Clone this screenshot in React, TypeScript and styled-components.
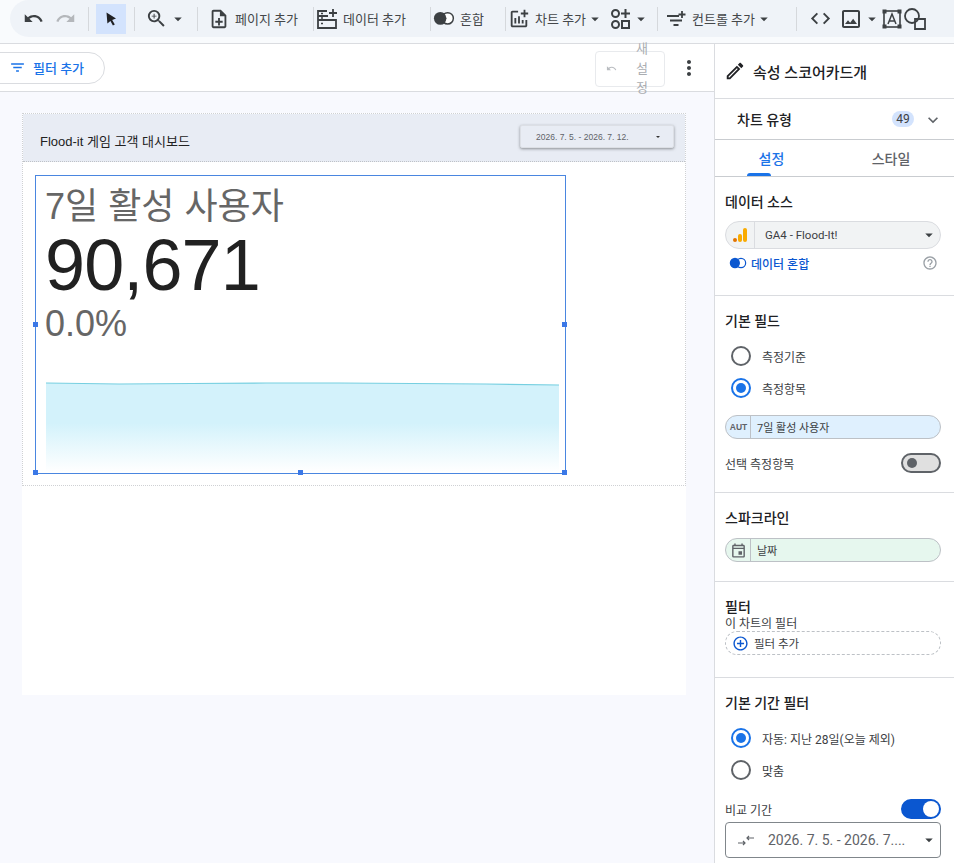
import React, { FunctionComponent, ReactNode } from "react";
import styled, { createGlobalStyle } from "styled-components";
import {
  MdUndo,
  MdRedo,
  MdZoomIn,
  MdOutlineNoteAdd,
  MdOutlineAddchart,
  MdCode,
  MdOutlineImage,
  MdArrowDropDown,
  MdMoreVert,
  MdFilterList,
  MdExpandMore,
  MdHelpOutline,
  MdOutlineEdit,
  MdOutlineEvent,
  MdAddCircleOutline,
} from "react-icons/md";

const FONT = `Roboto, "Noto Sans CJK KR", "Liberation Sans", sans-serif`;
const CHART_FONT = `"Liberation Sans", "Noto Sans CJK KR", sans-serif`;

const GlobalStyle = createGlobalStyle`
  html, body {
    margin: 0;
    padding: 0;
    background: #fff;
  }
  body {
    font-family: ${FONT};
    color: #202124;
  }
  * { box-sizing: border-box; }
`;

const Screen = styled.div`
  width: 954px;
  height: 863px;
  overflow: hidden;
  display: flex;
  flex-direction: column;
`;

const TopBar = styled.div`
  height: 44px;
  flex: none;
  background: #f9fbfd;
  border-bottom: 1px solid #dadce0;
  padding-left: 10px;
`;

const ToolPill = styled.div`
  height: 37px;
  width: 1000px;
  background: #eff3f8;
  border-radius: 19px 0 0 19px;
  display: flex;
  align-items: center;
  padding-left: 7px;
  color: #3c4043;
  white-space: nowrap;
`;

const Sep = styled.div<{ $gap?: number }>`
  width: 1px;
  height: 24px;
  flex: none;
  background: #d5d8dc;
  margin: 0 ${(p) => p.$gap ?? 8}px;
`;

const ToolBtn = styled.div<{ $w: number; $off?: boolean }>`
  width: ${(p) => p.$w}px;
  height: 30px;
  flex: none;
  display: flex;
  align-items: center;
  justify-content: center;
  color: ${(p) => (p.$off ? "#b4b7bb" : "#3c4043")};
`;

const CursorBtn = styled(ToolBtn)`
  background: #d3e3fd;
  color: #202124;
`;

const ToolLabel = styled.span`
  font-size: 13px;
  color: #44474a;
  margin-left: 5px;
`;

const ToolGroup = styled.div<{ $w: number }>`
  width: ${(p) => p.$w}px;
  flex: none;
  display: flex;
  align-items: center;
  justify-content: flex-start;
`;

const Main = styled.div`
  flex: 1;
  display: flex;
  min-height: 0;
`;

const Work = styled.div`
  width: 714px;
  flex: none;
  display: flex;
  flex-direction: column;
`;

const FilterBar = styled.div`
  height: 48px;
  flex: none;
  background: #fff;
  border-bottom: 1px solid #dadce0;
  display: flex;
  align-items: center;
  position: relative;
`;

const FilterPill = styled.div`
  height: 32px;
  width: 121px;
  margin-left: -16px;
  padding-left: 24px;
  border: 1px solid #dadce0;
  border-radius: 16px;
  display: flex;
  align-items: center;
  gap: 7px;
  color: #1a73e8;
  font-size: 13px;
  font-weight: 500;
`;

const ResetBtn = styled.div`
  width: 70px;
  height: 36px;
  margin-left: auto;
  margin-top: 2px;
  border: 1px solid #e8eaed;
  border-radius: 4px;
  display: flex;
  align-items: center;
  color: #b9bcc0;
  padding-left: 10px;
`;

const ResetText = styled.span`
  width: 14px;
  margin-left: 18px;
  font-size: 13px;
  line-height: 19.5px;
  word-break: break-all;
  text-align: center;
  color: #aaadb1;
`;

const MoreBtn = styled.div`
  width: 48px;
  flex: none;
  display: flex;
  justify-content: center;
  margin-right: 1px;
  margin-left: 0;
  color: #3c4043;
`;

const Canvas = styled.div`
  flex: 1;
  background: #f8f9fe;
  padding: 21px 28px 0 22px;
`;

const Page = styled.div`
  height: 582px;
  width: 664px;
  background: #fff;
`;

const Grid = styled.div`
  height: 373px;
  border: 1px dotted #cfd1d4;
  display: flex;
  flex-direction: column;
`;

const ReportHead = styled.div`
  height: 48px;
  flex: none;
  background: #e8ecf4;
  border-bottom: 1px dotted #bfc2c7;
  display: flex;
  align-items: center;
  justify-content: space-between;
  padding: 0 11px 0 17px;
`;

const ReportTitle = styled.div`
  font-family: ${CHART_FONT};
  font-size: 13px;
  color: #222;
  padding-top: 6px;
`;

const DateControl = styled.div`
  width: 154px;
  height: 23px;
  margin-top: -2px;
  background: #e8ecf4;
  border-radius: 2px;
  border: 1px solid #dcdfe5;
  box-shadow: 0 1px 3px rgba(60, 64, 67, 0.55);
  display: flex;
  align-items: center;
  justify-content: space-between;
  padding: 0 13px 0 15px;
  font-family: ${CHART_FONT};
  font-size: 8.5px;
  color: #5f6368;
`;

const TinyCaret = styled.span`
  width: 0;
  height: 0;
  border-left: 2.5px solid transparent;
  border-right: 2.5px solid transparent;
  border-top: 2.5px solid #333;
`;

const Scorecard = styled.div`
  position: relative;
  margin: 13px 0 0 12px;
  width: 531px;
  height: 299px;
  border: 1px solid #4a86e0;
  display: flex;
  flex-direction: column;
  padding-left: 9px;
  font-family: ${CHART_FONT};
`;

const ScoreTitle = styled.div`
  font-size: 36px;
  line-height: 42px;
  margin-top: 10px;
  color: #666;
  white-space: nowrap;
`;

const ScoreValue = styled.div`
  font-size: 72px;
  line-height: 74px;
  color: #212121;
  letter-spacing: -0.9px;
`;

const ScoreDelta = styled.div`
  font-size: 36px;
  line-height: 42px;
  margin-top: 1px;
  color: #666;
`;

const Spark = styled.svg`
  display: block;
  margin-top: auto;
  margin-left: 1px;
  margin-bottom: 1px;
`;

const Handle = styled.i<{ $x: string; $y: string }>`
  position: absolute;
  width: 5px;
  height: 5px;
  background: #3b78e7;
  left: ${(p) => p.$x};
  top: ${(p) => p.$y};
  margin: -3px 0 0 -3px;
`;

const Panel = styled.div`
  width: 240px;
  flex: none;
  background: #fff;
  border-left: 1px solid #dadce0;
  display: flex;
  flex-direction: column;
`;

const PanelHead = styled.div`
  height: 55px;
  flex: none;
  border-bottom: 1px solid #dadce0;
  display: flex;
  align-items: center;
  gap: 7px;
  padding-left: 9px;
  font-size: 15px;
  font-weight: 500;
`;

const ChartType = styled.div`
  height: 41px;
  flex: none;
  border-bottom: 1px solid #c9ccd0;
  display: flex;
  align-items: center;
  padding-left: 22px;
  font-size: 14px;
  font-weight: 500;
`;

const Badge = styled.span`
  margin-left: auto;
  width: 22px;
  height: 16px;
  border-radius: 8px;
  background: #d3e3fd;
  color: #3c4043;
  font-size: 12px;
  font-weight: 400;
  display: flex;
  align-items: center;
  justify-content: center;
`;

const Chevron = styled.span`
  width: 40px;
  display: flex;
  justify-content: center;
  padding-right: 2px;
  padding-top: 2px;
  color: #5f6368;
`;

const Tabs = styled.div`
  height: 37px;
  flex: none;
  border-bottom: 1px solid #c9ccd0;
  display: flex;
`;

const Tab = styled.div<{ $on?: boolean }>`
  width: 113px;
  position: relative;
  display: flex;
  justify-content: center;
  padding-top: 8px;
  font-size: 14px;
  font-weight: 500;
  color: ${(p) => (p.$on ? "#1a73e8" : "#5f6368")};
  &:last-child {
    width: 126px;
    padding-right: 0;
  }
  ${(p) =>
    p.$on &&
    `&::after {
      content: "";
      position: absolute;
      left: 32px;
      bottom: 0;
      width: 24px;
      height: 3px;
      border-radius: 3px 3px 0 0;
      background: #1a73e8;
    }`}
`;

const Section = styled.div<{ $h?: number }>`
  height: ${(p) => (p.$h ? `${p.$h}px` : "auto")};
  flex: ${(p) => (p.$h ? "none" : "1")};
  border-bottom: ${(p) => (p.$h ? "1px solid #dadce0" : "0")};
  padding: 15px 13px 0 10px;
`;

const SectionTitle = styled.div`
  font-size: 14px;
  font-weight: 500;
  line-height: 20px;
  color: #202124;
`;

const SourceBox = styled.div`
  height: 28px;
  margin-top: 9px;
  border: 1px solid #dadce0;
  border-radius: 14px;
  background: #f1f3f4;
  display: flex;
  align-items: center;
  font-size: 11.5px;
  color: #3c4043;
`;

const SourceLogo = styled.div`
  width: 29px;
  height: 100%;
  flex: none;
  border-right: 1px solid #dadce0;
  display: flex;
  align-items: center;
  justify-content: center;
`;

const SourceName = styled.span`
  margin-left: 10px;
  flex: 1;
`;

const CaretWrap = styled.span`
  display: flex;
  margin-right: 2px;
  color: #3c4043;
`;

const BlendRow = styled.div`
  display: flex;
  align-items: center;
  margin: 4px 0 0 4px;
  gap: 4px;
  color: #0b57d0;
  font-size: 12px;
  font-weight: 500;
  height: 20px;
`;

const HelpIcon = styled.span`
  margin-left: auto;
  display: flex;
  margin-right: 3px;
  color: #9aa0a6;
`;

const RadioRow = styled.div`
  height: 32px;
  display: flex;
  align-items: center;
  padding-left: 6px;
  gap: 11px;
  font-size: 12px;
  color: #3c4043;
`;

const RadioGroup = styled.div<{ $top: number }>`
  margin-top: ${(p) => p.$top}px;
`;

const RadioDot = styled.span<{ $on?: boolean }>`
  width: 20px;
  height: 20px;
  border-radius: 50%;
  flex: none;
  border: 2px solid ${(p) => (p.$on ? "#1a73e8" : "#5f6368")};
  display: flex;
  align-items: center;
  justify-content: center;
  &::after {
    content: "";
    width: 10px;
    height: 10px;
    border-radius: 50%;
    background: ${(p) => (p.$on ? "#1a73e8" : "transparent")};
  }
`;

const FieldChip = styled.div<{ $bg: string; $top: number }>`
  height: 24px;
  margin-top: ${(p) => p.$top}px;
  border: 1px solid #bdc1c6;
  border-radius: 12px;
  background: ${(p) => p.$bg};
  display: flex;
  align-items: center;
  font-size: 11px;
  color: #3c4043;
`;

const ChipType = styled.span`
  width: 25px;
  height: 100%;
  flex: none;
  border-right: 1px solid #bdc1c6;
  display: flex;
  align-items: center;
  justify-content: center;
  font-family: "Liberation Sans", sans-serif;
  font-size: 8.5px;
  font-weight: 700;
  color: #5f6368;
  padding-left: 1px;
`;

const ChipText = styled.span`
  margin-left: 6px;
`;

const SwitchRow = styled.div<{ $top: number }>`
  display: flex;
  align-items: center;
  justify-content: space-between;
  margin-top: ${(p) => p.$top}px;
  font-size: 12px;
  height: 20px;
  color: #3c4043;
`;

const Switch = styled.span<{ $on?: boolean }>`
  width: 40px;
  height: 20px;
  flex: none;
  border-radius: 10px;
  display: flex;
  align-items: center;
  position: relative;
  background: ${(p) => (p.$on ? "#0b57d0" : "#e0e0e0")};
  border: 2px solid ${(p) => (p.$on ? "#0b57d0" : "#5f6368")};
  &::after {
    content: "";
    position: absolute;
    border-radius: 50%;
    width: ${(p) => (p.$on ? "16px" : "10px")};
    height: ${(p) => (p.$on ? "16px" : "10px")};
    background: ${(p) => (p.$on ? "#fff" : "#5f6368")};
    left: ${(p) => (p.$on ? "20px" : "4px")};
  }
`;

const FilterCaption = styled.div`
  font-size: 12px;
  line-height: 14px;
  margin-top: 0;
  color: #3c4043;
`;

const AddFilter = styled.div`
  height: 24px;
  border: 1px dashed #bdc1c6;
  border-radius: 12px;
  display: flex;
  align-items: center;
  gap: 5px;
  padding-left: 6px;
  font-size: 11.5px;
  color: #3c4043;
`;

const AddIcon = styled.span`
  display: flex;
  color: #0b57d0;
`;

const CompareBox = styled.div`
  height: 36px;
  margin-top: 3px;
  border: 1px solid #80868b;
  border-radius: 4px;
  display: flex;
  align-items: center;
  padding-left: 11px;
  font-size: 14px;
  color: #5f6368;
  white-space: nowrap;
`;

const CompareText = styled.span`
  margin-left: 13px;
  flex: 1;
`;

const Caret = () => <MdArrowDropDown size={18} />;

const BlendIcon: FunctionComponent<{ size: number; color: string }> = ({ size, color }) => (
  <svg width={size} height={size * 0.67} viewBox="0 0 24 16" fill="none">
    <circle cx="8" cy="8" r="7" fill={color} />
    <circle cx="16" cy="8" r="6.2" fill="#fff" stroke={color} strokeWidth="1.6" />
    <path d="M12 2.5a7 7 0 0 1 0 11a7 7 0 0 1 0-11z" fill={color} />
  </svg>
);

const CursorIcon = () => (
  <svg width="16" height="16" viewBox="0 0 16 16">
    <path d="M3.5 1.5 13 7.6 9.2 9l2.6 4.6-1.9 1-2.5-4.7-3 2.7z" fill="currentColor" />
  </svg>
);

const DataIcon = () => (
  <svg width="22" height="22" viewBox="0 0 22 22" fill="none" stroke="#3c4043" strokeWidth="1.8">
    <path d="M11 3H2v17h18v-8H2M2 8h10" />
    <path d="M17 1v8M13 5h8" />
    <path d="M5 5.5h2M5 10h2M5 15.5h2" strokeWidth="1.4" />
  </svg>
);

const WidgetIcon = () => (
  <svg width="24" height="24" viewBox="0 0 24 24" fill="none" stroke="#3c4043" strokeWidth="2">
    <circle cx="7.5" cy="6.5" r="3.5" />
    <circle cx="7.5" cy="17.5" r="3.5" />
    <rect x="14" y="14" width="7" height="7" />
    <path d="M17.5 2v9M13 6.5h9" />
  </svg>
);

const ControlIcon = () => (
  <svg width="22" height="22" viewBox="0 0 22 22" fill="none" stroke="#3c4043" strokeWidth="1.8">
    <path d="M2 8h12M5 12.5h12M8.5 17h5" />
    <path d="M17 3v7M13.5 6.5h7" />
  </svg>
);

const TextBoxIcon = () => (
  <svg width="22" height="22" viewBox="0 0 22 22" fill="none" stroke="#3c4043">
    <rect x="3" y="3" width="16" height="16" strokeWidth="1.6" />
    <path d="M7 16l4-10 4 10M8.5 13h5" strokeWidth="1.5" />
    <path d="M1.5 1.5h4v4h-4zM16.5 1.5h4v4h-4zM1.5 16.5h4v4h-4zM16.5 16.5h4v4h-4z" fill="#3c4043" strokeWidth="0" />
  </svg>
);

const ShapeIcon = () => (
  <svg width="24" height="24" viewBox="0 0 24 24" fill="none" stroke="#3c4043" strokeWidth="1.8">
    <circle cx="9" cy="9" r="7" />
    <path d="M12 12h10v10H12z" />
  </svg>
);

const AnalyticsIcon = () => (
  <svg width="18" height="18" viewBox="0 0 18 18">
    <rect x="12" y="2" width="4" height="14" rx="2" fill="#f9ab00" />
    <rect x="7" y="8" width="4" height="8" rx="2" fill="#f9ab00" />
    <circle cx="4" cy="14" r="2" fill="#e37400" />
  </svg>
);

const CompareIcon = () => (
  <svg width="18" height="16" viewBox="0 0 18 16" fill="none" stroke="#5f6368" strokeWidth="1.2">
    <path d="M1 11h7M6 9l2 2-2 2M17 6h-7M12 4 10 6l2 2" />
  </svg>
);

const Sparkline = () => (
  <svg width="0" height="0" style={{ display: "none" }} />
);

type ToolLabelledProps = { width: number; icon: ReactNode; label: string; caret?: boolean };

const ToolLabelled: FunctionComponent<ToolLabelledProps> = ({ width, icon, label, caret }) => (
  <ToolGroup $w={width}>
    {icon}
    <ToolLabel>{label}</ToolLabel>
    {caret && <Caret />}
  </ToolGroup>
);

const App: FunctionComponent = () => {
  return (
    <Screen>
      <GlobalStyle />
      <Sparkline />
      <TopBar>
        <ToolPill>
          <ToolBtn $w={32}>
            <MdUndo size={21} />
          </ToolBtn>
          <ToolBtn $w={32} $off>
            <MdRedo size={21} />
          </ToolBtn>
          <Sep $gap={7} />
          <CursorBtn $w={30}>
            <CursorIcon />
          </CursorBtn>
          <Sep />
          <ToolGroup $w={47}>
            <MdZoomIn size={23} style={{ marginLeft: 2, marginRight: 1 }} />
            <Caret />
          </ToolGroup>
          <Sep $gap={7} />
          <ToolLabelled width={106} icon={<MdOutlineNoteAdd size={22} style={{ marginLeft: 3 }} />} label="페이지 추가" />
          <Sep $gap={2} />
          <ToolLabelled width={112} icon={<DataIcon />} label="데이터 추가" />
          <Sep $gap={2} />
          <ToolLabelled width={70} icon={<BlendIcon size={22} color="#3c4043" />} label="혼합" />
          <Sep $gap={2} />
          <ToolLabelled width={100} icon={<MdOutlineAddchart size={22} />} label="차트 추가" caret />
          <WidgetIcon />
          <Caret />
          <Sep $gap={7} />
          <ToolLabelled width={125} icon={<ControlIcon />} label="컨트롤 추가" caret />
          <Sep $gap={6} />
          <MdCode size={23} style={{ marginLeft: 6 }} />
          <MdOutlineImage size={24} style={{ marginLeft: 7 }} />
          <Caret />
          <TextBoxIcon />
          <ShapeIcon />
        </ToolPill>
      </TopBar>
      <Main>
        <Work>
          <FilterBar>
            <FilterPill>
              <MdFilterList size={17} />
              필터 추가
            </FilterPill>
            <ResetBtn>
              <MdUndo size={11} />
              <ResetText>새설정</ResetText>
            </ResetBtn>
            <MoreBtn>
              <MdMoreVert size={24} />
            </MoreBtn>
          </FilterBar>
          <Canvas>
            <Page>
              <Grid>
                <ReportHead>
                  <ReportTitle>Flood-it 게임 고객 대시보드</ReportTitle>
                  <DateControl>
                    2026. 7. 5. - 2026. 7. 12.
                    <TinyCaret />
                  </DateControl>
                </ReportHead>
                <Scorecard>
                  <ScoreTitle>7일 활성 사용자</ScoreTitle>
                  <ScoreValue>90,671</ScoreValue>
                  <ScoreDelta>0.0%</ScoreDelta>
                  <Spark width="513" height="90" viewBox="0 0 513 90">
                    <defs>
                      <linearGradient id="sparkFill" x1="0" y1="0" x2="0" y2="1">
                        <stop offset="0.45" stopColor="#d3f2fb" />
                        <stop offset="1" stopColor="#ffffff" />
                      </linearGradient>
                    </defs>
                    <path d="M0 1 L73 2 L146 1.5 L220 1 L293 1 L366 1.5 L440 2 L513 3 V90 H0 Z" fill="url(#sparkFill)" />
                    <path d="M0 1 L73 2 L146 1.5 L220 1 L293 1 L366 1.5 L440 2 L513 3" fill="none" stroke="#76cfe0" strokeWidth="1.2" />
                  </Spark>
                  <Handle $x="0" $y="50%" />
                  <Handle $x="100%" $y="50%" />
                  <Handle $x="50%" $y="100%" />
                  <Handle $x="0" $y="100%" />
                  <Handle $x="100%" $y="100%" />
                </Scorecard>
              </Grid>
            </Page>
          </Canvas>
        </Work>
        <Panel>
          <PanelHead>
            <MdOutlineEdit size={22} />
            속성 스코어카드개
          </PanelHead>
          <ChartType>
            차트 유형
            <Badge>49</Badge>
            <Chevron>
              <MdExpandMore size={20} />
            </Chevron>
          </ChartType>
          <Tabs>
            <Tab $on>설정</Tab>
            <Tab>스타일</Tab>
          </Tabs>
          <Section $h={119}>
            <SectionTitle>데이터 소스</SectionTitle>
            <SourceBox>
              <SourceLogo>
                <AnalyticsIcon />
              </SourceLogo>
              <SourceName>GA4 - Flood-It!</SourceName>
              <CaretWrap>
                <Caret />
              </CaretWrap>
            </SourceBox>
            <BlendRow>
              <BlendIcon size={18} color="#0b57d0" />
              데이터 혼합
              <HelpIcon>
                <MdHelpOutline size={16} />
              </HelpIcon>
            </BlendRow>
          </Section>
          <Section $h={197}>
            <SectionTitle>기본 필드</SectionTitle>
            <RadioGroup $top={9}>
              <RadioRow>
                <RadioDot />
                측정기준
              </RadioRow>
              <RadioRow>
                <RadioDot $on />
                측정항목
              </RadioRow>
            </RadioGroup>
            <FieldChip $bg="#dff0fe" $top={11}>
              <ChipType>AUT</ChipType>
              <ChipText>7일 활성 사용자</ChipText>
            </FieldChip>
            <SwitchRow $top={14}>
              선택 측정항목
              <Switch />
            </SwitchRow>
          </Section>
          <Section $h={89}>
            <SectionTitle>스파크라인</SectionTitle>
            <FieldChip $bg="#e6f7ee" $top={10}>
              <ChipType>
                <MdOutlineEvent size={17} />
              </ChipType>
              <ChipText>날짜</ChipText>
            </FieldChip>
          </Section>
          <Section $h={96}>
            <SectionTitle>필터</SectionTitle>
            <FilterCaption>이 차트의 필터</FilterCaption>
            <AddFilter>
              <AddIcon>
                <MdAddCircleOutline size={17} />
              </AddIcon>
              필터 추가
            </AddFilter>
          </Section>
          <Section>
            <SectionTitle>기본 기간 필터</SectionTitle>
            <RadioGroup $top={9}>
              <RadioRow>
                <RadioDot $on />
                자동: 지난 28일(오늘 제외)
              </RadioRow>
              <RadioRow>
                <RadioDot />
                맞춤
              </RadioRow>
            </RadioGroup>
            <SwitchRow $top={13}>
              비교 기간
              <Switch $on />
            </SwitchRow>
            <CompareBox>
              <CompareIcon />
              <CompareText>2026. 7. 5. - 2026. 7....</CompareText>
              <CaretWrap>
                <Caret />
              </CaretWrap>
            </CompareBox>
          </Section>
        </Panel>
      </Main>
    </Screen>
  );
};

export default App;
